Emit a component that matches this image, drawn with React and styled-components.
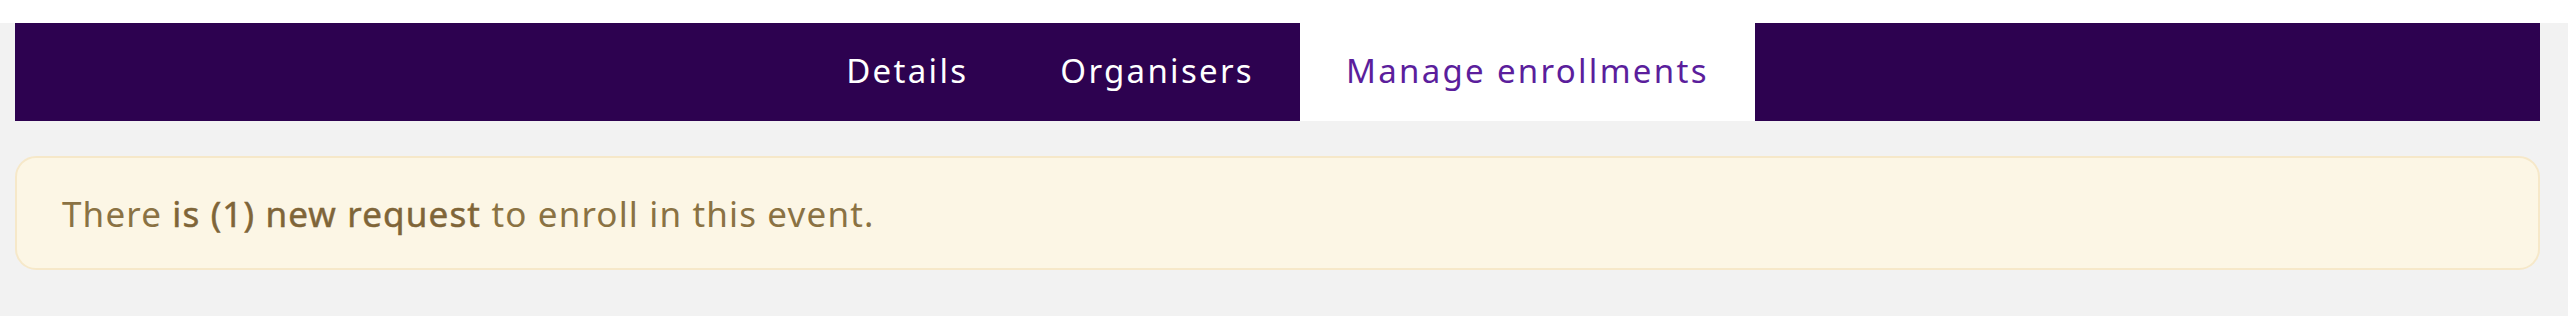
import { createGlobalStyle, styled } from "styled-components"

const GlobalStyle = createGlobalStyle`
  html, body {
    margin: 0;
    padding: 0;
    background: #f2f2f2;
    font-family: "Noto Sans", "Open Sans", sans-serif;
  }
`

const TopBand = styled.div`
  height: 23px;
  background: #ffffff;
`

const Page = styled.div`
  padding: 0 28px 0 15px;
`

const NavBar = styled.nav`
  display: flex;
  justify-content: center;
  height: 98px;
  background: #2d0250;
`

const Tab = styled.a`
  display: flex;
  align-items: center;
  padding: 0 46px 4px;
  font-size: 33px;
  letter-spacing: 2.3px;
  text-decoration: none;
  cursor: pointer;
  color: ${(p) => (p.$active ? "#5b1e9c" : "#ffffff")};
  background: ${(p) => (p.$active ? "#ffffff" : "transparent")};
`

const Alert = styled.div`
  margin-top: 35px;
  display: flex;
  align-items: center;
  padding: 0 45px;
  box-sizing: border-box;
  height: 114px;
  background: #fcf6e5;
  border: 2px solid #f6e8c9;
  border-radius: 21px;
  color: #8a7243;
  font-size: 35px;
  letter-spacing: 1.15px;
`

const Strong = styled.span`
  color: #7f6538;
  -webkit-text-stroke: 0.5px #7f6538;
`

export default function App() {
  return (
    <>
      <GlobalStyle />
      <TopBand />
      <Page>
        <NavBar>
          <Tab>Details</Tab>
          <Tab>Organisers</Tab>
          <Tab $active>Manage enrollments</Tab>
        </NavBar>
        <Alert>
          <span>
            There <Strong>is (1) new request</Strong> to enroll in this event.
          </span>
        </Alert>
      </Page>
    </>
  )
}
